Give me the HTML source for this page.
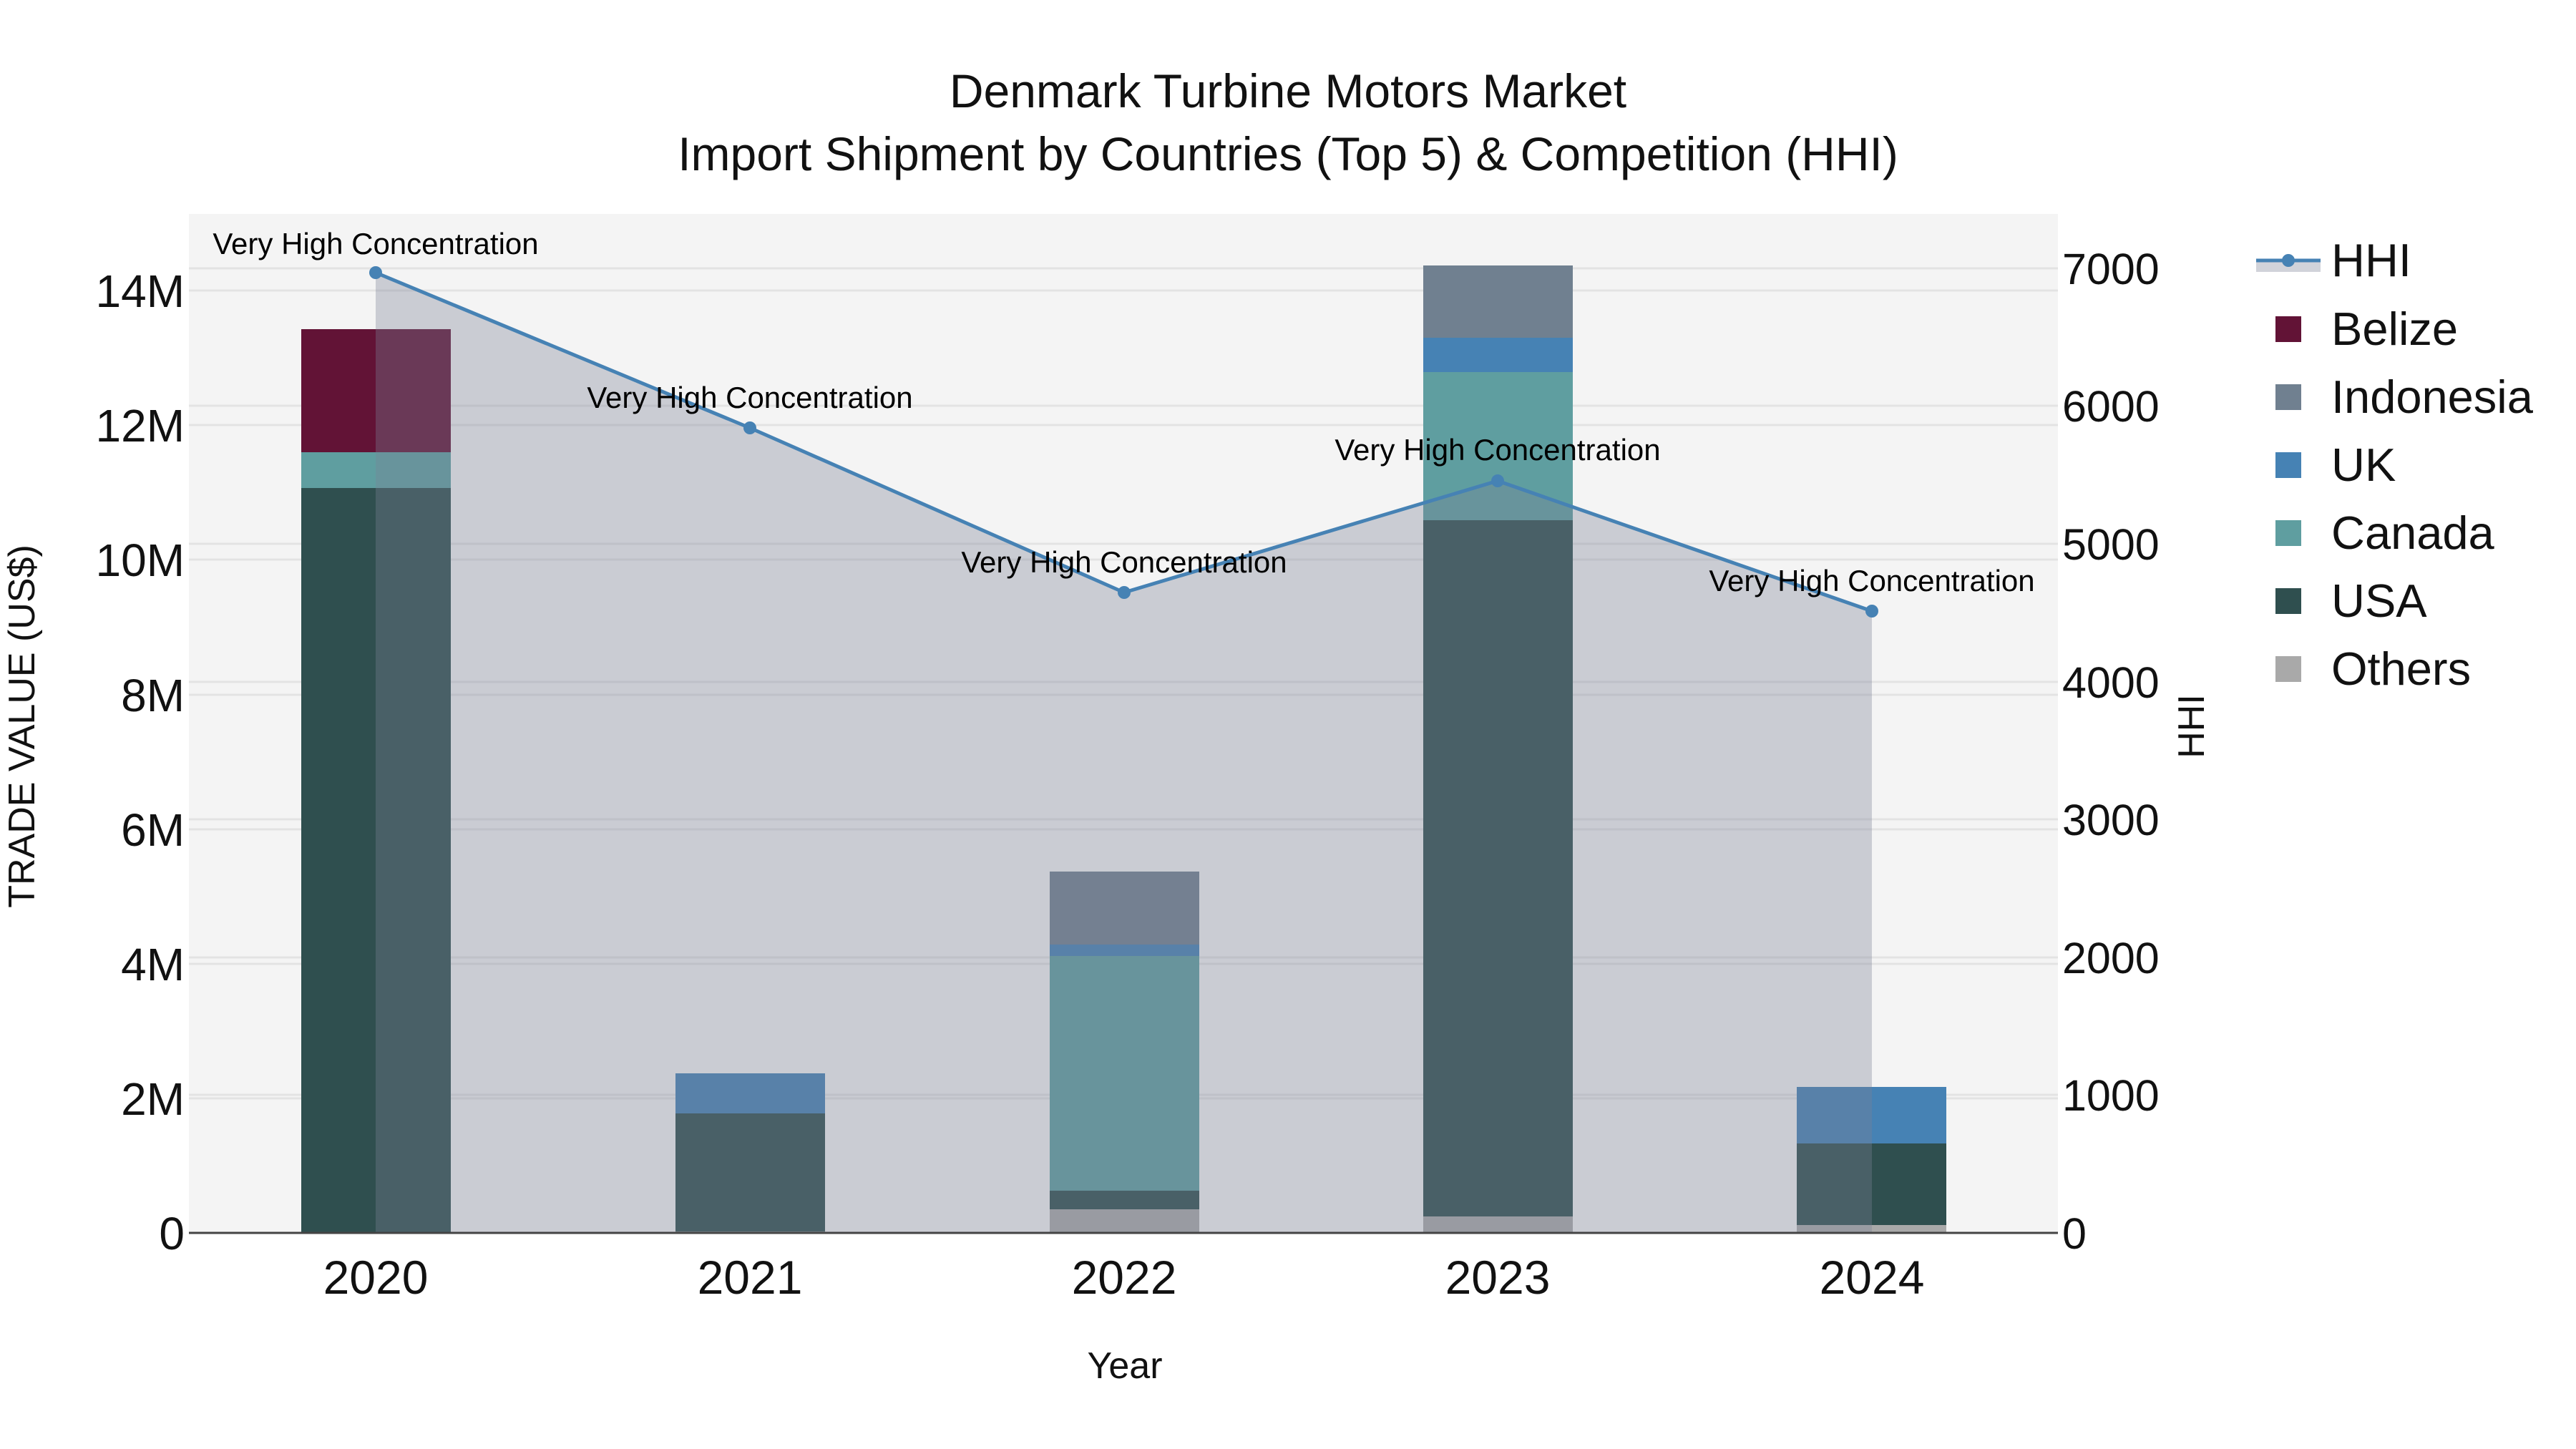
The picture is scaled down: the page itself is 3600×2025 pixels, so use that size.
<!DOCTYPE html>
<html><head><meta charset="utf-8"><style>
html,body{margin:0;padding:0;background:#fff}
svg{display:block;font-family:"Liberation Sans",Arial,sans-serif}
</style></head><body>
<svg width="3600" height="2025" viewBox="0 0 3600 2025" xmlns="http://www.w3.org/2000/svg">
<rect width="3600" height="2025" fill="#fff"/>
<rect x="264" y="299" width="2612" height="1424" fill="#f4f4f4"/>
<g stroke="#e3e3e3" stroke-width="3">
<line x1="264" x2="2876" y1="1535" y2="1535"/><line x1="264" x2="2876" y1="1347" y2="1347"/>
<line x1="264" x2="2876" y1="1159" y2="1159"/><line x1="264" x2="2876" y1="971" y2="971"/>
<line x1="264" x2="2876" y1="782" y2="782"/><line x1="264" x2="2876" y1="594" y2="594"/>
<line x1="264" x2="2876" y1="406" y2="406"/>
<line x1="264" x2="2876" y1="1530" y2="1530"/><line x1="264" x2="2876" y1="1338" y2="1338"/>
<line x1="264" x2="2876" y1="1145" y2="1145"/><line x1="264" x2="2876" y1="953" y2="953"/>
<line x1="264" x2="2876" y1="760" y2="760"/><line x1="264" x2="2876" y1="567" y2="567"/>
<line x1="264" x2="2876" y1="375" y2="375"/>
</g>
<g>
<rect x="421" y="682" width="209" height="1041" fill="#2f4f4f"/>
<rect x="421" y="632" width="209" height="50" fill="#5f9ea0"/>
<rect x="421" y="460" width="209" height="172" fill="#621336"/>
<rect x="944" y="1721" width="209" height="2" fill="#a9a9a9"/>
<rect x="944" y="1556" width="209" height="165" fill="#2f4f4f"/>
<rect x="944" y="1500" width="209" height="56" fill="#4682b4"/>
<rect x="1467" y="1690" width="209" height="33" fill="#a9a9a9"/>
<rect x="1467" y="1664" width="209" height="26" fill="#2f4f4f"/>
<rect x="1467" y="1336" width="209" height="328" fill="#5f9ea0"/>
<rect x="1467" y="1320" width="209" height="16" fill="#4682b4"/>
<rect x="1467" y="1218" width="209" height="102" fill="#708090"/>
<rect x="1989" y="1700" width="209" height="23" fill="#a9a9a9"/>
<rect x="1989" y="727" width="209" height="973" fill="#2f4f4f"/>
<rect x="1989" y="520" width="209" height="207" fill="#5f9ea0"/>
<rect x="1989" y="472" width="209" height="48" fill="#4682b4"/>
<rect x="1989" y="371" width="209" height="101" fill="#708090"/>
<rect x="2511" y="1712" width="209" height="11" fill="#a9a9a9"/>
<rect x="2511" y="1598" width="209" height="114" fill="#2f4f4f"/>
<rect x="2511" y="1519" width="209" height="79" fill="#4682b4"/>
</g>
<polygon points="525,381 1048,598 1571,828 2093,672 2616,854 2616,1723 525,1723" fill="rgba(122,128,148,0.35)"/>
<polyline points="525,381 1048,598 1571,828 2093,672 2616,854" fill="none" stroke="#4682b4" stroke-width="5"/>
<g fill="#4682b4"><circle cx="525" cy="381" r="9"/><circle cx="1048" cy="598" r="9"/><circle cx="1571" cy="828" r="9"/><circle cx="2093" cy="672" r="9"/><circle cx="2616" cy="854" r="9"/></g>
<line x1="264" x2="2876" y1="1723" y2="1723" stroke="#444" stroke-width="3"/>
<g font-size="42" fill="#000" text-anchor="middle">
<text x="525" y="355">Very High Concentration</text>
<text x="1048" y="570">Very High Concentration</text>
<text x="1571" y="800">Very High Concentration</text>
<text x="2093" y="643">Very High Concentration</text>
<text x="2616" y="826">Very High Concentration</text>
</g>
<g font-size="64" fill="#111" text-anchor="end">
<text x="258" y="1746">0</text><text x="258" y="1558">2M</text><text x="258" y="1370">4M</text>
<text x="258" y="1182">6M</text><text x="258" y="994">8M</text><text x="258" y="805">10M</text>
<text x="258" y="617">12M</text><text x="258" y="429">14M</text>
</g>
<g font-size="61" fill="#111" text-anchor="start">
<text x="2882" y="1745">0</text><text x="2882" y="1552">1000</text><text x="2882" y="1360">2000</text>
<text x="2882" y="1167">3000</text><text x="2882" y="975">4000</text><text x="2882" y="782">5000</text>
<text x="2882" y="589">6000</text><text x="2882" y="397">7000</text>
</g>
<g font-size="66" fill="#111" text-anchor="middle">
<text x="525" y="1808">2020</text><text x="1048" y="1808">2021</text><text x="1571" y="1808">2022</text>
<text x="2093" y="1808">2023</text><text x="2616" y="1808">2024</text>
</g>
<text x="1572" y="1926" font-size="52" fill="#111" text-anchor="middle">Year</text>
<text transform="translate(48,1015) rotate(-90)" font-size="52" fill="#111" text-anchor="middle">TRADE VALUE (US$)</text>
<text transform="translate(3080,1015) rotate(-90)" font-size="52" fill="#111" text-anchor="middle">HHI</text>
<g font-size="66" fill="#111" text-anchor="middle">
<text x="1800" y="150">Denmark Turbine Motors Market</text>
<text x="1800" y="238">Import Shipment by Countries (Top 5) &amp; Competition (HHI)</text>
</g>
<rect x="3153" y="364" width="90" height="16" fill="rgba(122,128,148,0.35)"/>
<line x1="3153" x2="3243" y1="364" y2="364" stroke="#4682b4" stroke-width="5"/>
<circle cx="3198" cy="364" r="9" fill="#4682b4"/>
<rect x="3180" y="442" width="36" height="36" fill="#621336"/>
<rect x="3180" y="537" width="36" height="36" fill="#708090"/>
<rect x="3180" y="632" width="36" height="36" fill="#4682b4"/>
<rect x="3180" y="727" width="36" height="36" fill="#5f9ea0"/>
<rect x="3180" y="822" width="36" height="36" fill="#2f4f4f"/>
<rect x="3180" y="917" width="36" height="36" fill="#a9a9a9"/>
<g font-size="65" fill="#111">
<text x="3258" y="386">HHI</text><text x="3258" y="482">Belize</text><text x="3258" y="577">Indonesia</text>
<text x="3258" y="672">UK</text><text x="3258" y="767">Canada</text><text x="3258" y="862">USA</text>
<text x="3258" y="957">Others</text>
</g>
</svg>
</body></html>
